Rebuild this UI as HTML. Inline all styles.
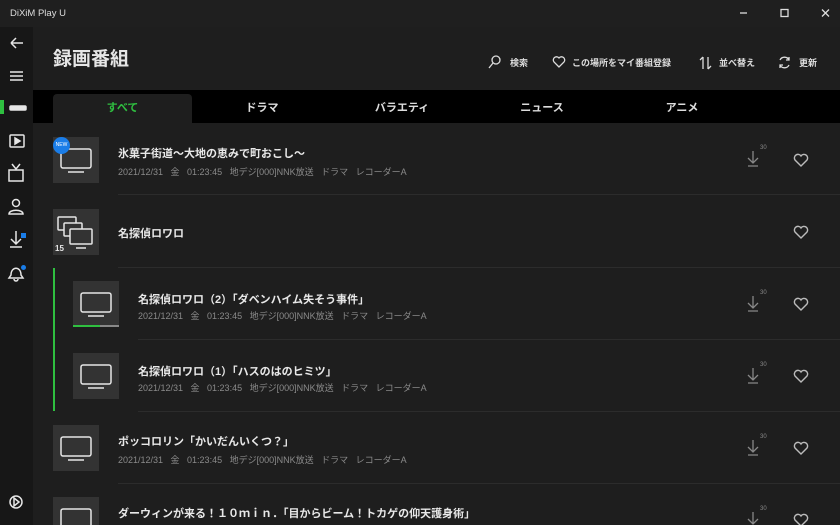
<!DOCTYPE html>
<html style="overflow:hidden;width:840px;height:525px"><head><meta charset="utf-8"><style>
*{margin:0;padding:0;box-sizing:border-box}
body{width:840px;height:525px;overflow:hidden;background:#1e1e1e;font-family:"Liberation Sans","Noto Sans CJK JP",sans-serif;color:#e6e6e6;position:relative}
.a{position:absolute}
.tb{left:0;top:0;width:840px;height:27px;background:#1f1f1f}
.side{left:0;top:27px;width:33px;height:498px;background:#171717}
.tabs{left:33px;top:90px;width:807px;height:33px;background:#000}
.tab{top:94px;height:29px;font-size:11px;font-weight:bold;text-align:center;line-height:29px;color:#ddd}
.th{width:46px;height:46px;background:#333}
.t1{font-size:11px;font-weight:bold;color:#e8e8e8}
.t2{font-size:9px;color:#8a8a8a;word-spacing:5px}
.sep{height:1px;background:#2c2c2c}
.hd{font-size:9px;font-weight:bold;color:#ddd;top:56px}
svg{position:absolute}
</style></head><body>
<div class="a tb"></div>
<div class="a" style="left:10px;top:8px;font-size:9.5px;color:#ddd">DiXiM Play U</div>
<svg style="left:740px;top:8px" width="100" height="14" fill="none" stroke="#ddd" stroke-width="1.3"><path d="M0 5h7"/><rect x="41" y="1.5" width="7" height="7"/><path d="M82 1.5l7 7M89 1.5l-7 7"/></svg>
<div class="a side"></div>
<div class="a" style="left:0;top:100px;width:4px;height:14px;background:#2fbf40"></div>
<svg style="left:0;top:0" width="33" height="525" fill="none" stroke="#e6e6e6" stroke-width="1.5">
<path d="M11 43h12M11 43l5-5M11 43l5 5"/>
<path d="M10 72h13M10 76h13M10 80h13"/>
<rect x="10" y="106" width="16" height="4" rx="1" fill="#e6e6e6"/>
<rect x="10" y="135" width="14" height="12" rx="1"/><path d="M15 138v6l5-3z" fill="#e6e6e6"/>
<rect x="9" y="170" width="14" height="11"/><path d="M12 164l4 5 4-5"/>
<circle cx="16" cy="203" r="3.5"/><path d="M9 214c0-5 14-5 14 0z"/>
<path d="M16 231v13M11 239l5 5 5-5M10 247h12"/>
<path d="M11 275c0-9 10-9 10 0l2 3H9z M14 279a2 2 0 004 0"/>
<circle cx="16" cy="502" r="6"/><path d="M14 498l5 4-5 4z"/>
</svg>
<div class="a" style="left:21px;top:233px;width:5px;height:5px;background:#1a7de8"></div>
<div class="a" style="left:21px;top:265px;width:5px;height:5px;background:#1a7de8;border-radius:50%"></div>
<div class="a" style="left:53px;top:44px;font-size:19px;font-weight:bold;color:#e6e6e6">録画番組</div>
<svg style="left:488px;top:55px" width="340" height="16" fill="none" stroke="#ddd" stroke-width="1.3">
<circle cx="8" cy="5" r="4"/><path d="M5 8l-4 5"/>
<path d="M71 12l-5-5a3 3 0 015-4 3 3 0 015 4z"/>
<path d="M215 2v12M215 2l-3 3M220 2v12M220 14l3-3"/>
<path d="M292 5a5 5 0 019 0M301 2v3h-3M292 10a5 5 0 009 0M292 13v-3h3"/>
</svg>
<div class="a hd" style="left:510px">検索</div>
<div class="a hd" style="left:572px">この場所をマイ番組登録</div>
<div class="a hd" style="left:719px">並べ替え</div>
<div class="a hd" style="left:799px">更新</div>
<div class="a tabs"></div>
<div class="a tab" style="left:53px;width:139px;background:#1e1e1e;border-radius:4px 4px 0 0;color:#2fbf40">すべて</div>
<div class="a tab" style="left:192px;width:140px">ドラマ</div>
<div class="a tab" style="left:332px;width:140px">バラエティ</div>
<div class="a tab" style="left:472px;width:140px">ニュース</div>
<div class="a tab" style="left:612px;width:140px">アニメ</div>

<div class="a th" style="left:53px;top:137px"></div>
<div class="a t1" style="left:118px;top:145px">氷菓子街道～大地の恵みで町おこし～</div>
<div class="a t2" style="left:118px;top:165px">2021/12/31 金 01:23:45 地デジ[000]NNK放送 ドラマ レコーダーA</div>
<div class="a sep" style="left:118px;top:194px;width:722px"></div>

<div class="a th" style="left:53px;top:209px"></div>
<div class="a" style="left:55px;top:244px;font-size:8px;font-weight:bold">15</div>
<div class="a t1" style="left:118px;top:225px">名探偵ロワロ</div>
<div class="a sep" style="left:118px;top:267px;width:722px"></div>
<div class="a" style="left:53px;top:268px;width:2px;height:143px;background:#2fbf40"></div>

<div class="a th" style="left:73px;top:281px"></div>
<div class="a" style="left:73px;top:325px;width:27px;height:2px;background:#2fbf40"></div>
<div class="a" style="left:100px;top:325px;width:19px;height:2px;background:#888"></div>
<div class="a t1" style="left:138px;top:291px">名探偵ロワロ（2）「ダベンハイム失そう事件」</div>
<div class="a t2" style="left:138px;top:309px">2021/12/31 金 01:23:45 地デジ[000]NNK放送 ドラマ レコーダーA</div>
<div class="a sep" style="left:138px;top:339px;width:702px"></div>

<div class="a th" style="left:73px;top:353px"></div>
<div class="a t1" style="left:138px;top:363px">名探偵ロワロ（1）「ハスのはのヒミツ」</div>
<div class="a t2" style="left:138px;top:381px">2021/12/31 金 01:23:45 地デジ[000]NNK放送 ドラマ レコーダーA</div>
<div class="a sep" style="left:138px;top:411px;width:702px"></div>

<div class="a th" style="left:53px;top:425px"></div>
<div class="a t1" style="left:118px;top:433px">ポッコロリン「かいだんいくつ？」</div>
<div class="a t2" style="left:118px;top:453px">2021/12/31 金 01:23:45 地デジ[000]NNK放送 ドラマ レコーダーA</div>
<div class="a sep" style="left:118px;top:483px;width:722px"></div>

<div class="a th" style="left:53px;top:497px;height:28px"></div>
<div class="a t1" style="left:118px;top:505px">ダーウィンが来る！１０ｍｉｎ．「目からビーム！トカゲの仰天護身術」</div>

<svg style="left:0;top:0" width="840" height="525" fill="none" stroke="#e6e6e6" stroke-width="1.5">
<rect x="61" y="149" width="30" height="19" rx="2"/><path d="M68 172h16"/>
<g><rect x="58" y="217" width="18" height="13" rx="1"/><rect x="64" y="223" width="18" height="13" rx="1" fill="#333"/><rect x="70" y="229" width="22" height="15" rx="1" fill="#333"/><path d="M76 248h10"/></g>
<rect x="81" y="293" width="30" height="19" rx="2"/><path d="M88 316h16"/>
<rect x="81" y="365" width="30" height="19" rx="2"/><path d="M88 388h16"/>
<rect x="61" y="437" width="30" height="19" rx="2"/><path d="M68 460h16"/>
<rect x="61" y="509" width="30" height="19" rx="2"/>
<g stroke="#888" stroke-width="1.3">
<path d="M753 151v12M748 158l5 5 5-5M748 166h10"/>
<path d="M753 296v12M748 303l5 5 5-5M748 311h10"/>
<path d="M753 368v12M748 375l5 5 5-5M748 383h10"/>
<path d="M753 440v12M748 447l5 5 5-5M748 455h10"/>
<path d="M753 512v12M748 519l5 5 5-5"/>
</g>
<g stroke="#bbb" stroke-width="1.4">
<path d="M801 166l-6-6a3.5 3.5 0 016-4 3.5 3.5 0 016 4z"/>
<path d="M801 238l-6-6a3.5 3.5 0 016-4 3.5 3.5 0 016 4z"/>
<path d="M801 310l-6-6a3.5 3.5 0 016-4 3.5 3.5 0 016 4z"/>
<path d="M801 382l-6-6a3.5 3.5 0 016-4 3.5 3.5 0 016 4z"/>
<path d="M801 454l-6-6a3.5 3.5 0 016-4 3.5 3.5 0 016 4z"/>
<path d="M801 526l-6-6a3.5 3.5 0 016-4 3.5 3.5 0 016 4z"/>
</g>
</svg>
<div class="a" style="left:53px;top:137px;width:17px;height:17px;border-radius:50%;background:#1a7de8;font-size:5px;color:#fff;text-align:center;line-height:17px">NEW</div>
<div class="a" style="left:760px;top:145px;font-size:6px;color:#888">30</div>
<div class="a" style="left:760px;top:290px;font-size:6px;color:#888">30</div>
<div class="a" style="left:760px;top:362px;font-size:6px;color:#888">30</div>
<div class="a" style="left:760px;top:434px;font-size:6px;color:#888">30</div>
<div class="a" style="left:760px;top:506px;font-size:6px;color:#888">30</div>
</body></html>
